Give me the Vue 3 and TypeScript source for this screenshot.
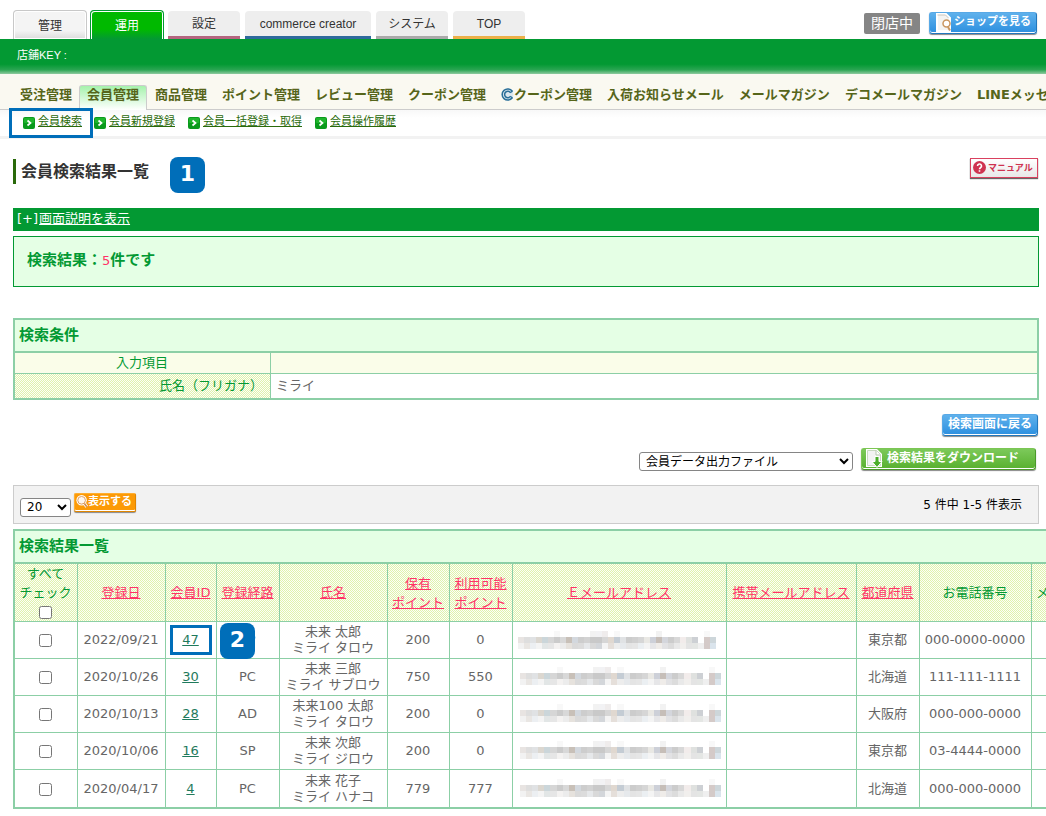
<script setup lang="ts">
import { ref } from 'vue'

interface Member {
  date: string
  id: string
  route: string
  name: string
  kana: string
  points: string
  usable: string
  pref: string
  tel: string
}

const members: Member[] = [
  { date: '2022/09/21', id: '47', route: 'SP', name: '未来 太郎', kana: 'ミライ タロウ', points: '200', usable: '0', pref: '東京都', tel: '000-0000-0000' },
  { date: '2020/10/26', id: '30', route: 'PC', name: '未来 三郎', kana: 'ミライ サブロウ', points: '750', usable: '550', pref: '北海道', tel: '111-111-1111' },
  { date: '2020/10/13', id: '28', route: 'AD', name: '未来100 太郎', kana: 'ミライ タロウ', points: '200', usable: '0', pref: '大阪府', tel: '000-000-0000' },
  { date: '2020/10/06', id: '16', route: 'SP', name: '未来 次郎', kana: 'ミライ ジロウ', points: '200', usable: '0', pref: '東京都', tel: '03-4444-0000' },
  { date: '2020/04/17', id: '4', route: 'PC', name: '未来 花子', kana: 'ミライ ハナコ', points: '779', usable: '777', pref: '北海道', tel: '000-000-0000' }
]

const nav = ['受注管理', '会員管理', '商品管理', 'ポイント管理', 'レビュー管理', 'クーポン管理', 'クーポン管理', '入荷お知らせメール', 'メールマガジン', 'デコメールマガジン', 'LINEメッセージ']
const subnav = ['会員検索', '会員新規登録', '会員一括登録・取得', '会員操作履歴']

const output = ref('会員データ出力ファイル')
const perPage = ref('20')

// Mosaic that hides the e-mail addresses: [column, row, colour]
const middle = 'e8e4e2 dedede e0e2e4 dbd7d0 cbd6da d6d6d6 cbcbcb d8d8d8 c8c0b8 d3d8de cdcdcd d2d2d2 c9c9c9 c9c9c9 d6d6d6 e0d8d0 c4ccd4 e0e2e4 cccccc d0d0d0 d6d6d6 e9e8e4 cdd0d8 c6beb8 d4d6dc cccccc d8d8d8 f2eceb dfe1df cdd0d4 ffffff d4cac8 cdd6da'.split(' ')
const bottom = 'f2f2f2 e9e6e3 eceff2 f4f4f4 e2e6e6 e6e6e6 f4f2f1 ececec e6e2dd dadada dcdcdc e6e8ea d9d9d9 d3d6da f4f4f4 e5dfda ededed e6e9ec e4e4e4 e6e6e6 ebeff2 f4f4f4 e6e6e8 efece9 e2e2e4 dcdcdc e9e9e9 f1efed e4e4e4 e4e6e4 efefef d4cac8 dae4ec'.split(' ')
const tiles: [number, number, string][] = [
  [6, 0, '#f8f8f8'], [12, 0, '#f2f2f2'], [13, 0, '#f2f2f4'], [14, 0, '#efecec'],
  [16, 0, '#f8f8f8'], [23, 0, '#f2f2f2'], [31, 0, '#f8f8f8'],
  ...middle.map((c, i): [number, number, string] => [i, 1, '#' + c]),
  ...bottom.map((c, i): [number, number, string] => [i, 2, '#' + c])
]
</script>

<template>
  <div class="page">
    <header class="top">
      <nav class="tabs">
        <a href="#" class="tab tab-first">管理</a>
        <a href="#" class="tab tab-on">運用</a>
        <a href="#" class="tab tab-pink">設定</a>
        <a href="#" class="tab tab-blue">commerce creator</a>
        <a href="#" class="tab tab-grey">システム</a>
        <a href="#" class="tab tab-gold">TOP</a>
      </nav>
      <div class="shop">
        <span class="closed">閉店中</span>
        <button type="button" class="btn blue shop-btn">
          <svg width="17" height="19" viewBox="0 0 17 19" aria-hidden="true">
            <path d="M2 1h9l4 4v13H2z" fill="#f4f4f2" stroke="#fff" stroke-width="2" />
            <path d="M2.500 2h8l3 3" fill="none" stroke="#c9c5bd" />
            <circle cx="11.500" cy="10.500" r="3.500" fill="#fff" stroke="#c99660" stroke-width="1.500" />
            <path d="M13 14l2 3.500" stroke="#c99660" stroke-width="2" />
          </svg>
          <span>ショップを見る</span>
        </button>
      </div>
    </header>

    <div class="keybar">店鋪KEY :</div>

    <nav class="main-nav">
      <a v-for="(item, i) in nav" :key="i" href="#" :class="{ on: i === 1 }">
        <svg v-if="i === 6" width="13" height="13" viewBox="0 0 13 13" aria-hidden="true">
          <circle cx="6.500" cy="6.500" r="6" fill="#dbe7ee" />
          <path d="M11.300 3.200A5.600 5.600 0 1 0 11.300 9.800" fill="none" stroke="#2a6f98" stroke-width="1.500" />
          <path d="M9.400 4.600A3.200 3.200 0 1 0 9.400 8.400" fill="none" stroke="#2a6f98" stroke-width="1.500" />
          <path d="M11.600 3L9.200 4.800M11.600 10L9.200 8.200" stroke="#2a6f98" stroke-width="1.200" />
        </svg>{{ item }}</a>
    </nav>

    <nav class="sub-nav">
      <a v-for="(item, i) in subnav" :key="item" href="#" :class="{ framed: i === 0 }">
        <svg width="12" height="12" viewBox="0 0 12 12" aria-hidden="true">
          <rect width="12" height="12" rx="2" fill="#0a9a1c" />
          <rect x="1" y="1" width="10" height="5" rx="1" fill="#1fb52c" />
          <path d="M4.500 3.500L7.500 6l-3 2.500" fill="none" stroke="#fff" stroke-width="1.700" />
        </svg><span>{{ item }}</span></a>
    </nav>

    <main>
      <div class="title-row">
        <h1>会員検索結果一覧</h1>
        <span class="step">1</span>
        <button type="button" class="manual">
          <svg width="13" height="13" viewBox="0 0 13 13" aria-hidden="true">
            <circle cx="6.500" cy="6.500" r="6.500" fill="#cf3350" />
            <path d="M4.500 5a2 2 0 1 1 3 1.700c-.8.500-1 .7-1 1.500M6.500 9.300v1.500" fill="none" stroke="#fff" stroke-width="1.600" />
          </svg>
          <span>マニュアル</span>
        </button>
      </div>

      <div class="explain"><span>[+]</span><a href="#">画面説明を表示</a></div>

      <p class="count">検索結果：<span>5</span>件です</p>

      <table class="cond">
        <colgroup><col class="w-label"><col></colgroup>
        <thead>
          <tr><th colspan="2" class="caption">検索条件</th></tr>
        </thead>
        <tbody>
          <tr class="sub"><th>入力項目</th><td></td></tr>
          <tr><th class="check name">氏名（フリガナ）</th><td>ミライ</td></tr>
        </tbody>
      </table>

      <div class="back-row">
        <button type="button" class="btn blue">検索画面に戻る</button>
      </div>
      <div class="dl-row">
        <select v-model="output" aria-label="出力ファイル">
          <option>会員データ出力ファイル</option>
        </select>
        <button type="button" class="btn green">
          <svg width="17" height="19" viewBox="0 0 17 19" aria-hidden="true">
            <path d="M0 0h11l5 5v13H0z" fill="#fff" />
            <path d="M1.500 1.500h9l4 4v11h-13z" fill="#f3f3f3" stroke="#c8d8c0" />
            <path d="M10 1.500V6h4.500" fill="#fff" stroke="#b7c8ae" />
            <path d="M9 7.500h4v5h3l-5 6-5-6h3z" fill="#4bae2a" stroke="#fff" />
          </svg>
          <span>検索結果をダウンロード</span>
        </button>
      </div>

      <div class="pager">
        <select v-model="perPage" aria-label="表示件数">
          <option>20</option>
        </select>
        <button type="button" class="btn orange">
          <svg width="15" height="17" viewBox="0 0 15 17" aria-hidden="true">
            <path d="M10.500 11l3 4" stroke="#fff" stroke-width="4" />
            <circle cx="7" cy="7" r="6.500" fill="#fff" />
            <circle cx="7" cy="7" r="4.800" fill="#fdf6ee" stroke="#d89a62" stroke-width="1.200" />
            <path d="M10.500 11l3 4" stroke="#cf8a4e" stroke-width="2" />
          </svg>
          <span>表示する</span>
        </button>
        <span class="range">5 件中 1-5 件表示</span>
      </div>

      <table class="result">
        <colgroup>
          <col class="c1"><col class="c2"><col class="c3"><col class="c4"><col class="c5"><col class="c6">
          <col class="c7"><col class="c8"><col class="c9"><col class="c10"><col class="c11"><col class="c12">
        </colgroup>
        <thead>
          <tr><th colspan="12" class="caption">検索結果一覧</th></tr>
          <tr class="heads">
            <th><label>すべて<br>チェック<br><input type="checkbox"></label></th>
            <th><a href="#">登録日</a></th>
            <th><a href="#">会員ID</a></th>
            <th><a href="#">登録経路</a></th>
            <th><a href="#">氏名</a></th>
            <th><a href="#">保有<br>ポイント</a></th>
            <th><a href="#">利用可能<br>ポイント</a></th>
            <th><a href="#">Ｅメールアドレス</a></th>
            <th><a href="#">携帯メールアドレス</a></th>
            <th><a href="#">都道府県</a></th>
            <th>お電話番号</th>
            <th class="left">メ</th>
          </tr>
        </thead>
        <tbody>
          <tr v-for="(m, i) in members" :key="m.id">
            <td><input type="checkbox" :aria-label="m.name"></td>
            <td>{{ m.date }}</td>
            <td class="anchor"><a href="#">{{ m.id }}</a><span v-if="i === 0" class="frame"></span></td>
            <td class="anchor">{{ m.route }}<span v-if="i === 0" class="step over">2</span></td>
            <td>{{ m.name }}<br>{{ m.kana }}</td>
            <td>{{ m.points }}</td>
            <td>{{ m.usable }}</td>
            <td class="mail" :class="{ wide: i > 0 }">
              <svg :width="i === 0 ? 198 : 201" height="18" viewBox="0 0 33 3" preserveAspectRatio="none" shape-rendering="crispEdges" aria-hidden="true">
                <rect v-for="(t, k) in tiles" :key="k" :x="t[0]" :y="t[1]" width="1" height="1" :fill="t[2]" />
              </svg>
            </td>
            <td></td>
            <td>{{ m.pref }}</td>
            <td>{{ m.tel }}</td>
            <td></td>
          </tr>
        </tbody>
      </table>
    </main>
  </div>
</template>

<style>
body {
  margin: 0;
  background: #fff;
}
</style>

<style scoped>
.page {
  overflow: hidden;
  font-family: "DejaVu Sans", "Noto Sans CJK JP", sans-serif;
  font-size: 13px;
  line-height: 16px;
  color: #666;
}
.page * {
  box-sizing: border-box;
}
button,
select {
  font-family: inherit;
}

/* top tabs */
.top {
  display: flex;
  justify-content: space-between;
  align-items: flex-end;
  height: 39px;
  padding: 0 9px 0 13px;
}
.tabs {
  display: flex;
  align-items: flex-end;
  gap: 5px;
  font-family: "Liberation Sans", "Noto Sans CJK JP", sans-serif;
  font-size: 12px;
}
.tab {
  display: flex;
  align-items: center;
  justify-content: center;
  width: 72px;
  height: 28px;
  border-radius: 4px 4px 0 0;
  background: #eee;
  color: #333;
  text-decoration: none;
  white-space: nowrap;
}
.tab-first,
.tab-on {
  width: 74px;
  height: 29px;
  margin-right: -2px;
  padding-top: 2px;
}
.tab-first {
  border: 1px solid #c8c8c8;
  border-bottom: 0;
  box-shadow: inset 0 0 0 1px #fff;
  background: linear-gradient(#f4f4f4 70%, #dcdcdc);
}
.tab-on {
  margin-right: -1px;
  border: 1px solid #039933;
  border-bottom: 0;
  box-shadow: inset 1px 1px 0 #fff, inset -1px 0 0 #fff;
  background: linear-gradient(#00b900 65%, #039933);
  color: #fff;
}
.tab-pink { border-bottom: 3px solid #b4657f; }
.tab-blue { border-bottom: 3px solid #2e6a9c; width: 126px; }
.tab-grey { border-bottom: 3px solid #aaa; }
.tab-gold { border-bottom: 3px solid #ecb048; }

.shop {
  display: flex;
  align-items: center;
  gap: 9px;
  padding-bottom: 5px;
}
.closed {
  width: 56px;
  height: 21px;
  border-radius: 2px;
  background: #858585;
  color: #fff;
  font-size: 14px;
  line-height: 20px;
  text-align: center;
}

/* picture-like push buttons */
.btn {
  display: flex;
  align-items: center;
  justify-content: center;
  gap: 3px;
  height: 22px;
  padding: 0 6px 2px;
  border: 1px solid;
  border-radius: 3px;
  color: #fff;
  font-size: 12px;
  font-weight: 700;
  line-height: 18px;
  white-space: nowrap;
  box-shadow: inset 0 -1px 0 #fff, 0 1px 1px #888;
}
.blue {
  border-color: #58a9e6 #2277bd #2277bd #58a9e6;
  background: linear-gradient(#5fb1ec, #2c8fdf);
}
.green {
  width: 175px;
  justify-content: flex-start;
  gap: 4px;
  padding-left: 4px;
  border-color: #7cc654 #4a9a2a #4a9a2a #7cc654;
  background: linear-gradient(#7cc95a, #58b02f);
}
.orange {
  height: 19px;
  width: 62px;
  gap: 0;
  padding: 0 3px 1px 1px;
  border-color: #ffae30 #e08600 #e08600 #ffae30;
  border-radius: 2px;
  background: #fc9a06;
  font-size: 11px;
}
.shop-btn {
  width: 108px;
  gap: 2px;
  padding: 0 4px 2px;
  font-size: 11px;
}

/* green bar */
.keybar {
  height: 35px;
  padding: 8px 17px;
  background: linear-gradient(#039933 72%, #2aa552 88%, #8fcb9f);
  color: #fff;
  font-family: "Liberation Sans", "Noto Sans CJK JP", sans-serif;
  font-size: 11px;
}

.main-nav {
  display: flex;
  align-items: flex-end;
  height: 36px;
  padding-left: 12px;
  border-bottom: 1px solid #ccc;
  background: #faf9f1;
  font-weight: 700;
}
.main-nav a {
  display: flex;
  flex: none;
  align-items: center;
  height: 25px;
  margin-bottom: -1px;
  padding: 0 7px 6px 8px;
  color: #56651a;
  text-decoration: none;
  white-space: nowrap;
}
.main-nav a.on {
  padding: 0 7px 6px;
  border: 1px solid #ccc;
  border-bottom: 0;
  border-radius: 3px 3px 0 0;
  background: linear-gradient(#a6f2ac, #fff);
}

.sub-nav {
  display: flex;
  align-items: flex-start;
  height: 29px;
  padding-left: 9px;
  border-bottom: 3px solid #f2f2f2;
  background: linear-gradient(#f8f8f8, #fff 8px);
  font-size: 11px;
}
.sub-nav a {
  display: flex;
  align-items: center;
  gap: 3px;
  height: 24px;
  margin-right: 13px;
  color: #2a6a0a;
}
.sub-nav svg {
  margin-top: 2px;
}
.sub-nav .framed {
  z-index: 1;
  flex: none;
  height: 30px;
  margin: -2px 1px 0 0;
  padding: 0 8px 2px 11px;
  border: 3px solid #006eb9;
}

/* content */
main {
  padding: 18px 7px 0 13px;
}
.title-row {
  display: flex;
  align-items: flex-start;
  height: 51px;
}
h1 {
  margin: 2px 0 0;
  padding-left: 5px;
  border-left: 3px solid #2a6a0a;
  color: #333;
  font-size: 16px;
  line-height: 25px;
}
.step {
  width: 35px;
  height: 36px;
  margin-left: 21px;
  border-radius: 8px;
  background: #006eb9;
  color: #fff;
  font-size: 22px;
  font-weight: 700;
  line-height: 34px;
  text-align: center;
}
.manual {
  display: flex;
  align-items: center;
  gap: 2px;
  width: 68px;
  height: 20px;
  margin: 1px 1px 0 auto;
  padding: 0 2px 1px;
  border: 1px solid #d9415f;
  background: linear-gradient(#fff, #e8e8e8);
  box-shadow: 0 1px 1px #666;
  color: #cf3350;
  font-size: 9px;
  font-weight: 700;
}
.explain {
  display: flex;
  gap: 1px;
  height: 23px;
  padding-left: 4px;
  background: #039933;
  color: #fff;
  line-height: 21px;
}
.explain a {
  color: #fff;
}
.count {
  height: 51px;
  margin: 5px 0 31px;
  padding-left: 13px;
  border: 1px solid #039933;
  background: #e5ffe5;
  color: #039933;
  font-size: 15px;
  font-weight: 700;
  line-height: 47px;
}
.count span {
  color: #f36;
  font-size: 13px;
  font-weight: 400;
}

table {
  border: 2px solid #8ccfa6;
  border-spacing: 0;
  table-layout: fixed;
}
th,
td {
  padding: 0 1px 0 0;
  border-right: 1px solid #8ccfa6;
  border-bottom: 1px solid #8ccfa6;
  font-weight: 400;
}
tr > :last-child {
  border-right: 0;
}
tbody tr:last-child > * {
  border-bottom: 0;
}
.caption {
  height: 33px;
  padding: 0 4px 1px;
  border-bottom: 2px solid #8ccfa6;
  background: #e5ffe5;
  color: #039933;
  font-size: 15px;
  font-weight: 700;
  text-align: left;
}
.check,
.heads th {
  background: repeating-conic-gradient(#dff3ac 0 25%, #fdfdf8 0 50%) 1px 0 / 2px 2px;
}

.cond {
  width: 100%;
}
.cond .w-label {
  width: 256px;
}
.cond tbody th {
  color: #039933;
}
.cond .sub > * {
  height: 21px;
  background: #fafde9;
}
.cond td {
  height: 24px;
  padding-left: 5px;
}
.cond .name {
  padding-right: 7px;
  text-align: right;
}

.back-row,
.dl-row {
  display: flex;
  align-items: flex-start;
  justify-content: flex-end;
}
.back-row {
  padding: 14px 1px 0 0;
}
.back-row .btn {
  width: 96px;
}
.dl-row {
  gap: 8px;
  padding: 12px 3px 0 0;
}
select {
  height: 19px;
  padding: 0 2px;
  border: 1px solid #858585;
  border-radius: 3px;
  background: #fff;
  color: #000;
  font-size: 12px;
}
.dl-row select {
  width: 214px;
  margin-top: 4px;
}

.pager {
  display: flex;
  align-items: center;
  height: 39px;
  margin: 14px 0 5px;
  padding: 0 16px 0 6px;
  border: 1px solid #ccc;
  background: #f2f2f2;
  color: #000;
}
.pager select {
  width: 51px;
  margin: 5px 3px 0 0;
}
.pager .btn {
  margin-bottom: 5px;
}
.range {
  margin-left: auto;
  font-size: 12px;
}

.result {
  width: 1138px;
  text-align: center;
}
.c1, .c4, .c7, .c10 { width: 63px; }
.c2 { width: 88px; }
.c3 { width: 51px; }
.c5 { width: 108px; }
.c6 { width: 62px; }
.c8 { width: 214px; }
.c9 { width: 130px; }
.c11 { width: 112px; }
.c12 { width: 117px; }
.heads th {
  height: 58px;
  color: #039933;
  line-height: 19px;
  white-space: nowrap;
}
.heads a {
  color: #f36;
}
.heads .left {
  padding-left: 4px;
  text-align: left;
}
input[type="checkbox"] {
  width: 13px;
  height: 13px;
  margin: 0;
  vertical-align: middle;
}
.result tbody td {
  height: 37px;
}
.result td a {
  color: #1f7a5c;
}
.result .mail {
  padding-left: 5px;
  text-align: left;
}
.result .wide {
  padding: 0 0 2px 7px;
}
.mail svg {
  display: block;
}
.anchor {
  position: relative;
}
.frame {
  position: absolute;
  top: 3px;
  left: 4px;
  width: 42px;
  height: 30px;
  border: 3px solid #006eb9;
}
.over {
  position: absolute;
  top: 1px;
  left: 3px;
  margin: 0;
}
</style>
